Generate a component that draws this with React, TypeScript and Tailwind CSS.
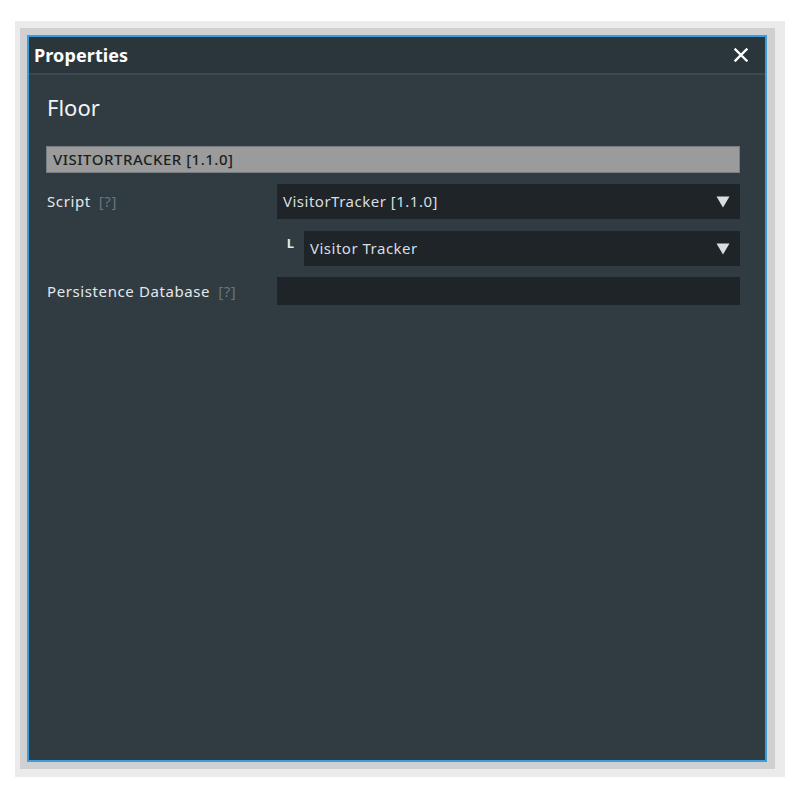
import React from "react";

const Triangle = () => (
  <svg width="14" height="12" viewBox="0 0 14 12" className="shrink-0">
    <polygon points="0.5,0.5 13.5,0.5 7,11.5" fill="#d9dee1" />
  </svg>
);

export default function App() {
  return (
    <div
      className="w-[800px] h-[800px] bg-white pt-[21px] pl-[15px]"
      style={{ fontFamily: '"Noto Sans", "Open Sans", sans-serif' }}
    >
      <div className="w-[770px] h-[756px] bg-[#ebebeb] pt-[7px] pl-[5px]">
        <div className="w-[755px] h-[741px] bg-[#cfd0d1] pt-[7px] pl-[7px]">
          <div className="w-[740px] h-[727px] border-2 border-[#3b9ddd] bg-[#313b42] flex flex-col">
            <div className="h-[36px] shrink-0 bg-[#2b353c] flex items-center justify-between pl-[5px] pr-[17px]">
              <span className="text-[18px] font-bold text-white leading-none tracking-[0.1px]">
                Properties
              </span>
              <svg width="14" height="14" viewBox="0 0 14 14">
                <path d="M1.5 1.5 L12.5 12.5 M12.5 1.5 L1.5 12.5" stroke="#ffffff" strokeWidth="2.4" strokeLinecap="square" />
              </svg>
            </div>
            <div className="h-[2px] shrink-0 bg-[#3d484f]" />
            <div className="flex-1 pl-[17px] pr-[25px] pt-[17px]">
              <div className="h-[30px] pl-[1px] flex items-center text-[22px] text-[#f2f4f5] leading-none">
                Floor
              </div>
              <div className="mt-[24px] h-[27px] bg-[#9b9b9b] border border-[#777d80] flex items-center pl-[6px] text-[15px] font-medium text-[#1b1f22] leading-none tracking-[0.5px]">
                VISITORTRACKER [1.1.0]
              </div>
              <div className="mt-[11px] flex">
                <div className="w-[231px] shrink-0 pl-[1px] flex items-center text-[15px] text-[#e4e8ea] tracking-[0.6px]">
                  Script<span className="ml-[8px] text-[#68747b]">[?]</span>
                </div>
                <div className="flex-1 h-[35px] bg-[#1e2427] flex items-center justify-between pl-[6px] pr-[10px] text-[15px] text-[#d9dee1] tracking-[0.5px]">
                  <span>VisitorTracker [1.1.0]</span>
                  <Triangle />
                </div>
              </div>
              <div className="mt-[12px] flex">
                <div className="w-[231px] shrink-0" />
                <div className="w-[27px] shrink-0 flex justify-center pt-[2px] text-[13px] font-bold text-[#e4e8ea] leading-[20px]">
                  L
                </div>
                <div className="flex-1 h-[35px] bg-[#1e2427] flex items-center justify-between pl-[6px] pr-[10px] text-[15px] text-[#d9dee1] tracking-[0.5px]">
                  <span>Visitor Tracker</span>
                  <Triangle />
                </div>
              </div>
              <div className="mt-[11px] flex">
                <div className="w-[231px] shrink-0 pl-[1px] flex items-center text-[15px] text-[#e4e8ea] tracking-[0.6px]">
                  Persistence Database<span className="ml-[8px] text-[#68747b]">[?]</span>
                </div>
                <div className="flex-1 h-[28px] bg-[#1e2427]" />
              </div>
            </div>
          </div>
        </div>
      </div>
    </div>
  );
}
